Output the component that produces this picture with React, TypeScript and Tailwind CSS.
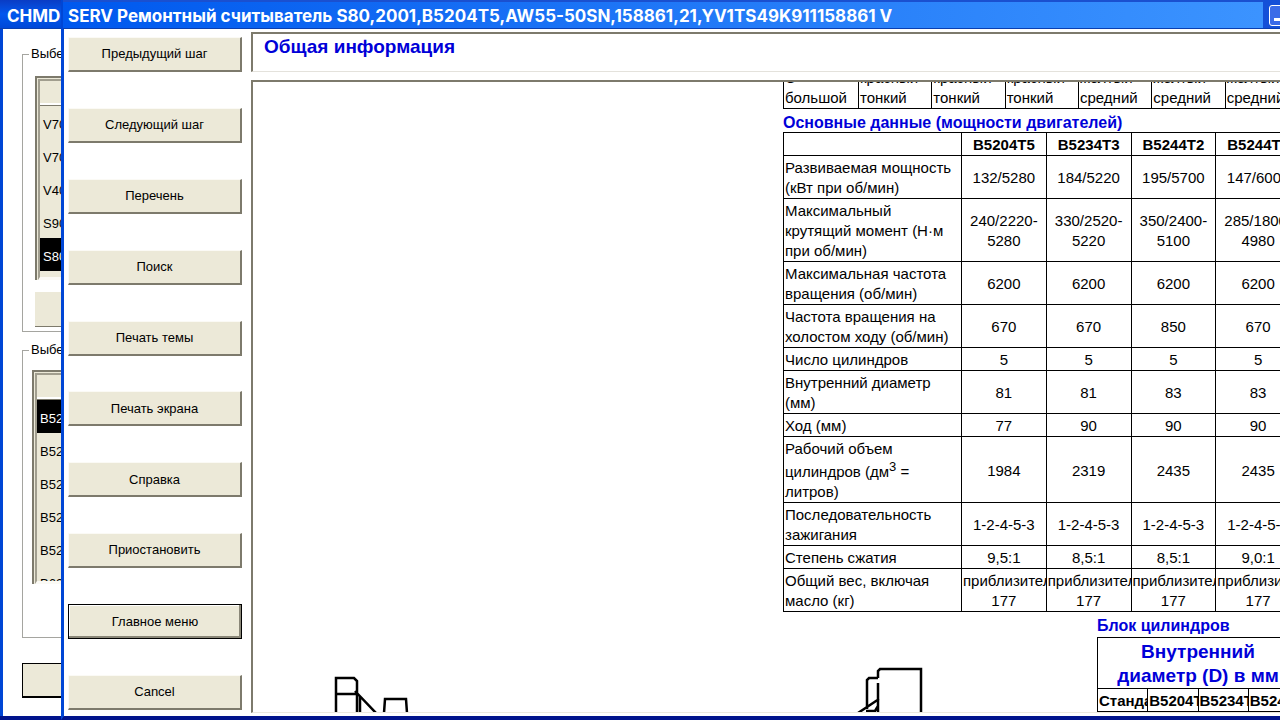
import { clsx } from 'clsx'

const actions = [
  'Предыдущий шаг',
  'Следующий шаг',
  'Перечень',
  'Поиск',
  'Печать темы',
  'Печать экрана',
  'Справка',
  'Приостановить',
  'Главное меню',
  'Cancel',
]

const models = ['V70', 'V70', 'V40', 'S90', 'S80']
const engines = ['B5204', 'B5234', 'B5244', 'B5244', 'B5254', 'B6294']

const beltRow = [
  ['С', 'большой'],
  ['красный', 'тонкий'],
  ['красный', 'тонкий'],
  ['красный', 'тонкий'],
  ['желтый', 'средний'],
  ['желтый', 'средний'],
  ['желтый', 'средний'],
]

const engineCodes = ['B5204T5', 'B5234T3', 'B5244T2', 'B5244T3']

const specs = [
  { label: 'Развиваемая мощность (кВт при об/мин)', values: ['132/5280', '184/5220', '195/5700', '147/6000'] },
  {
    label: 'Максимальный крутящий момент (Н·м при об/мин)',
    values: ['240/2220-5280', '330/2520-5220', '350/2400-5100', '285/1800-4980'],
  },
  { label: 'Максимальная частота вращения (об/мин)', values: ['6200', '6200', '6200', '6200'] },
  { label: 'Частота вращения на холостом ходу (об/мин)', values: ['670', '670', '850', '670'] },
  { label: 'Число цилиндров', values: ['5', '5', '5', '5'] },
  { label: 'Внутренний диаметр (мм)', values: ['81', '81', '83', '83'] },
  { label: 'Ход (мм)', values: ['77', '90', '90', '90'] },
  {
    label: (
      <>
        Рабочий объем цилиндров (дм<sup className="static align-super text-[13px] leading-4">3</sup> = литров)
      </>
    ),
    values: ['1984', '2319', '2435', '2435'],
  },
  { label: 'Последовательность зажигания', values: ['1-2-4-5-3', '1-2-4-5-3', '1-2-4-5-3', '1-2-4-5-3'] },
  { label: 'Степень сжатия', values: ['9,5:1', '8,5:1', '8,5:1', '9,0:1'] },
  {
    label: 'Общий вес, включая масло (кг)',
    values: ['приблизительно 177', 'приблизительно 177', 'приблизительно 177', 'приблизительно 177'],
  },
]

const sunken = 'border-t-2 border-l-2 border-t-[#7d7a6c] border-l-[#7d7a6c]'
const cell = 'border border-black px-px pt-0.5'
const titleFont = "font-['Inter','Liberation_Sans',sans-serif] text-[17px] leading-[32px] font-bold whitespace-nowrap text-white"

function ActionButton({ label, isDefault }: { label: string; isDefault?: boolean }) {
  return (
    <button
      className={clsx(
        'h-[35px] w-full shrink-0 bg-[#ece9d8] text-[13px] text-black',
        isDefault
          ? 'border border-black shadow-[inset_-2px_-2px_0_#8a8778,inset_1px_1px_0_#fff]'
          : 'border-t border-r-2 border-b-2 border-l border-t-[#fbfaf5] border-r-[#7d7a6c] border-b-[#7d7a6c] border-l-[#fbfaf5]',
      )}
    >
      {label}
    </button>
  )
}

function PickList({ items, selected, className }: { items: string[]; selected: number; className?: string }) {
  return (
    <div className={clsx('overflow-hidden bg-[#ece9d8] pt-px pl-px', sunken, className)}>
      <div className="h-full overflow-hidden border-b-3 border-l-2 border-b-[#fbfaf5] border-l-[#a19e8f]">
        <div className="h-[26px] border-t-2 border-b-2 border-t-[#a19e8f] border-b-white" />
        <ul className="border-t border-[#7d7a6c]">
          {items.map((item, i) => (
            <li key={i} className={clsx('h-[33px] pl-[3px] leading-[37px]', i === selected && 'bg-black text-white')}>
              {item}
            </li>
          ))}
        </ul>
      </div>
    </div>
  )
}

function BackWindow() {
  return (
    <div className="flex w-[61px] shrink-0 flex-col overflow-hidden border-b-4 border-b-[#00138c] bg-white text-[13px]">
      <div
        className={clsx(
          'h-[29px] shrink-0 border-b border-[#0a3fb0] bg-linear-to-b from-[#0a3cc4] via-[#0058ee] to-[#0048d8] pl-[7px]',
          titleFont,
        )}
      >
        CHMD
      </div>
      <div className="flex-1 border-l-3 border-[#0046d5] pt-[17px] pl-[19px]">
        <fieldset className="h-[286px] w-[200px] border border-[#a5a5a0] pl-3">
          <legend className="-ml-1.5 px-0.5 leading-4">Выберите</legend>
          <PickList items={models} selected={4} className="mt-3.5 h-[204px]" />
          <div className="mt-3 h-[35px] border-b border-[#7d7a6c] bg-[#ece9d8]" />
        </fieldset>
        <fieldset className="mt-2.5 h-[296px] w-[200px] border border-[#a5a5a0] pl-[9px]">
          <legend className="-ml-[3px] px-0.5 leading-4">Выберите</legend>
          <PickList items={engines} selected={0} className="mt-3 h-[214px]" />
        </fieldset>
        <div className="mt-[25px] h-[35px] w-[200px] border border-b-2 border-black bg-[#ece9d8]" />
      </div>
    </div>
  )
}

function EngineDrawing() {
  return (
    <svg width="600" height="48" viewBox="330 665 600 48" fill="none" stroke="#000" strokeWidth="2.5">
      <path d="M336 713V678H354L357 681V713M336 694H357M355 691L376 713M360 696V713" />
      <path d="M384 713L385 699H406L407 713" />
      <path d="M878 678V671L880 669H921V713M878 678H869L867 680V709M878 683V713M858 713L879 699M866 711H875L878 706" />
    </svg>
  )
}

export default function App() {
  return (
    <div className="flex h-screen overflow-hidden bg-white font-['Liberation_Sans',Arial,sans-serif] text-black">
      <BackWindow />
      <div className="flex min-w-0 flex-1 flex-col border-b-4 border-l-3 border-b-[#00138c] border-l-[#0046d5]">
        <header className="-ml-px flex h-[29px] shrink-0 items-stretch justify-between overflow-hidden border-b border-[#0a3fb0] bg-linear-to-r from-[#0058ee] to-[#3c94ff] shadow-[inset_0_2px_0_#1a50d0]">
          <h1 className={clsx('pl-[5px]', titleFont)}>
            SERV Ремонтный считыватель S80,2001,B5204T5,AW55-50SN,158861,21,YV1TS49K911158861 V
          </h1>
          <div className="w-[17px] shrink-0 overflow-hidden bg-[#1450d8] pt-[5px] pl-1.5">
            <button aria-label="Свернуть" className="flex h-[21px] w-[21px] items-end rounded-[3px] border border-white bg-[#3a6be8] pb-1 pl-1">
              <span className="h-[3px] w-2 bg-white" />
            </button>
          </div>
        </header>
        <div className="flex min-h-0 flex-1">
          <nav className="flex w-[187px] shrink-0 flex-col justify-between pt-2 pr-[9px] pb-1.5 pl-1">
            {actions.map((a) => (
              <ActionButton key={a} label={a} isDefault={a === 'Главное меню'} />
            ))}
          </nav>
          <main className="flex min-w-0 flex-1 flex-col pt-[3px] pb-[3px]">
            <div className={clsx('h-10 shrink-0 border-b border-b-[#e4e2dc] pl-[11px]', sunken)}>
              <h2 className="text-[19px] leading-[26px] font-bold text-[#0000d8]">Общая информация</h2>
            </div>
            <div className={clsx('mt-2 min-h-0 flex-1 overflow-hidden border-b border-b-[#ece9e0]', sunken)}>
              <div className="ml-[530px] flex h-[27px] flex-col justify-end overflow-hidden">
                <table className="w-[516px] table-fixed border-collapse text-[15px] leading-5">
                  <tbody>
                    <tr>
                      {beltRow.map(([thick, kind], i) => (
                        <td key={i} className={clsx(cell, i === 0 && 'w-[75px]')}>
                          {thick}
                          <br />
                          {kind}
                        </td>
                      ))}
                    </tr>
                  </tbody>
                </table>
              </div>
              <div className="ml-[530px] w-[518px]">
                <h3 className="h-[23px] text-base leading-7 font-bold whitespace-nowrap text-[#0000d8]">
                  Основные данные (мощности двигателей)
                </h3>
                <table className="w-full table-fixed border-collapse text-[15px] leading-5">
                  <thead>
                    <tr>
                      <th className={clsx(cell, 'w-[178px]')} />
                      {engineCodes.map((code) => (
                        <th key={code} className={cell}>
                          {code}
                        </th>
                      ))}
                    </tr>
                  </thead>
                  <tbody>
                    {specs.map((row, r) => (
                      <tr key={r}>
                        <td className={cell}>{row.label}</td>
                        {row.values.map((v, i) => (
                          <td key={i} className={clsx(cell, 'overflow-hidden text-center')}>
                            {v}
                          </td>
                        ))}
                      </tr>
                    ))}
                  </tbody>
                </table>
              </div>
              <div className="flex items-start pl-[77px]">
                <div className="mr-[167px] shrink-0 pt-[53px]">
                  <EngineDrawing />
                </div>
                <div className="w-[202px] shrink-0">
                  <h3 className="h-[25px] text-base leading-7 font-bold whitespace-nowrap text-[#0000d8]">Блок цилиндров</h3>
                  <table className="w-full table-fixed border-collapse text-[15px] leading-5">
                    <thead>
                      <tr>
                        <th colSpan={4} className={clsx(cell, 'text-[19px] leading-6 text-[#0000d8]')}>
                          Внутренний
                          <br />
                          диаметр (D) в мм
                        </th>
                      </tr>
                      <tr>
                        {['Стандарт', 'B5204T5', 'B5234T3', 'B5244T2'].map((h) => (
                          <th key={h} className={clsx(cell, 'overflow-hidden')}>
                            {h}
                          </th>
                        ))}
                      </tr>
                    </thead>
                    <tbody>
                      <tr>
                        <td className={cell}>C</td>
                        <td className={cell} />
                        <td className={cell} />
                        <td className={cell} />
                      </tr>
                    </tbody>
                  </table>
                </div>
              </div>
            </div>
          </main>
        </div>
      </div>
    </div>
  )
}
